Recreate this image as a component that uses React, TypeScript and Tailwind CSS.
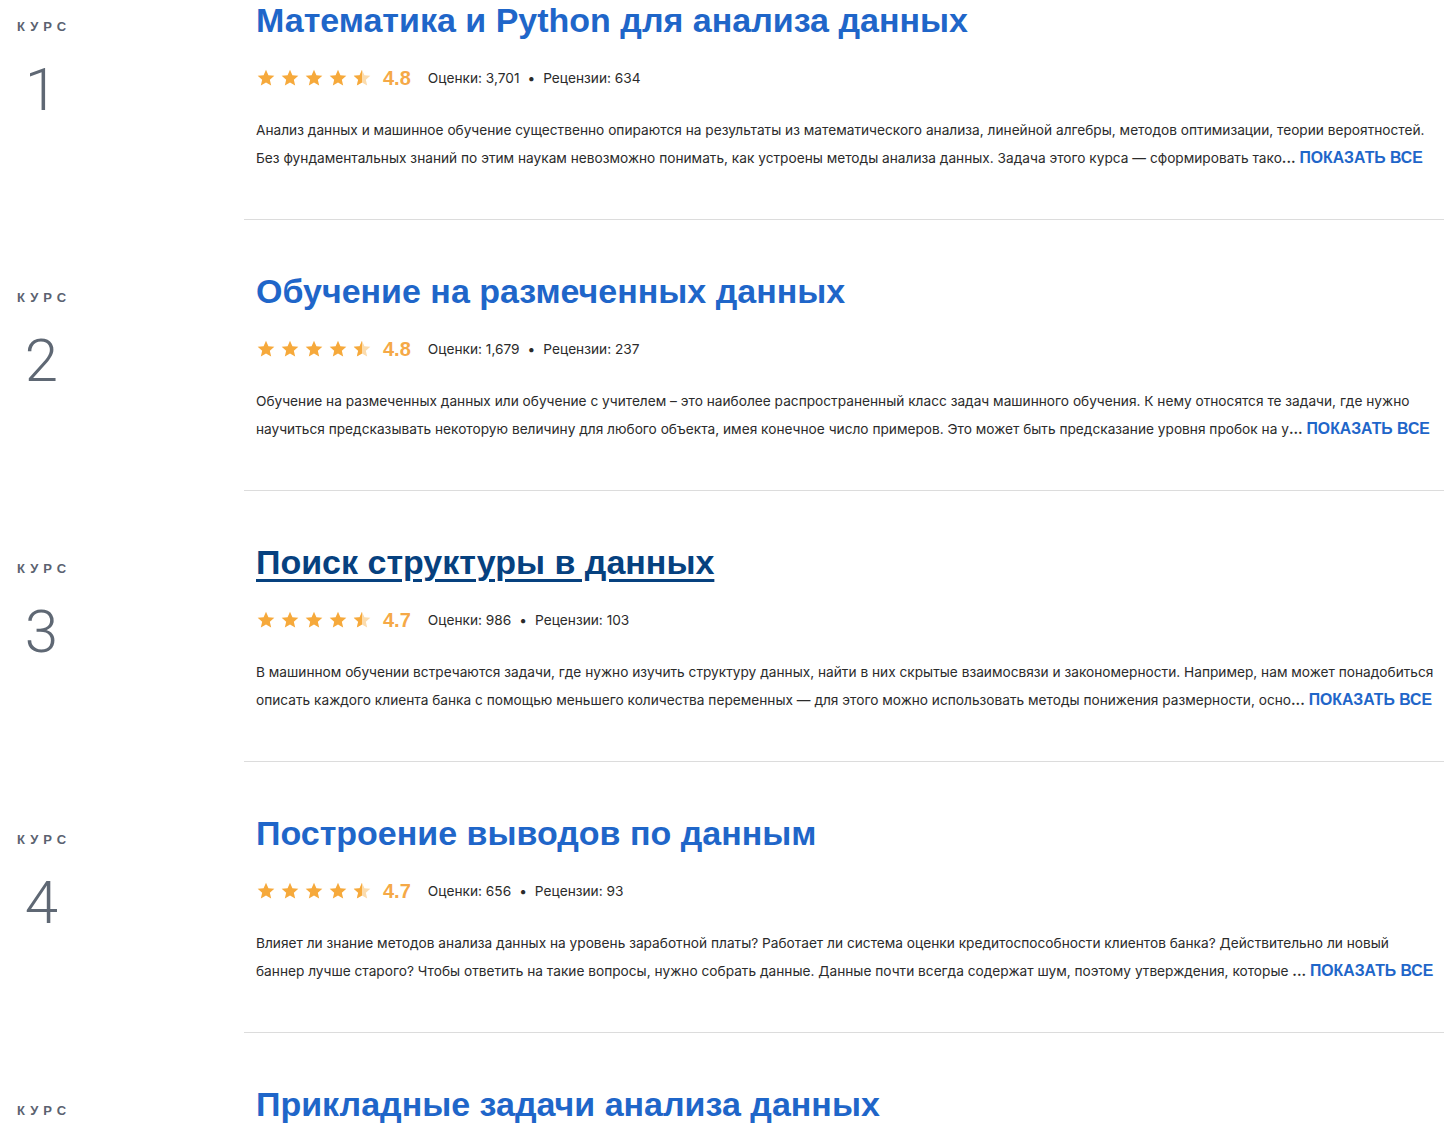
import React from "react";

type Course = {
  n: number;
  title: string;
  rating: string;
  votes: string;
  reviews: string;
  lines: [string, string];
  hovered?: boolean;
};

const courses: Course[] = [
  {
    n: 1,
    title: "Математика и Python для анализа данных",
    rating: "4.8",
    votes: "3,701",
    reviews: "634",
    lines: [
      "Анализ данных и машинное обучение существенно опираются на результаты из математического анализа, линейной алгебры, методов оптимизации, теории вероятностей.",
      "Без фундаментальных знаний по этим наукам невозможно понимать, как устроены методы анализа данных. Задача этого курса — сформировать тако",
    ],
  },
  {
    n: 2,
    title: "Обучение на размеченных данных",
    rating: "4.8",
    votes: "1,679",
    reviews: "237",
    lines: [
      "Обучение на размеченных данных или обучение с учителем – это наиболее распространенный класс задач машинного обучения. К нему относятся те задачи, где нужно",
      "научиться предсказывать некоторую величину для любого объекта, имея конечное число примеров. Это может быть предсказание уровня пробок на у",
    ],
  },
  {
    n: 3,
    title: "Поиск структуры в данных",
    rating: "4.7",
    votes: "986",
    reviews: "103",
    hovered: true,
    lines: [
      "В машинном обучении встречаются задачи, где нужно изучить структуру данных, найти в них скрытые взаимосвязи и закономерности. Например, нам может понадобиться",
      "описать каждого клиента банка с помощью меньшего количества переменных — для этого можно использовать методы понижения размерности, осно",
    ],
  },
  {
    n: 4,
    title: "Построение выводов по данным",
    rating: "4.7",
    votes: "656",
    reviews: "93",
    lines: [
      "Влияет ли знание методов анализа данных на уровень заработной платы? Работает ли система оценки кредитоспособности клиентов банка? Действительно ли новый",
      "баннер лучше старого? Чтобы ответить на такие вопросы, нужно собрать данные. Данные почти всегда содержат шум, поэтому утверждения, которые ",
    ],
  },
  {
    n: 5,
    title: "Прикладные задачи анализа данных",
    rating: "4.6",
    votes: "",
    reviews: "",
    lines: ["", ""],
  },
];

const STAR = "M12 2.2l2.9 6.6 7.1.6-5.4 4.7 1.6 7-6.2-3.7-6.2 3.7 1.6-7L2 9.4l7.1-.6z";

function Star({ half }: { half?: boolean }) {
  return (
    <svg viewBox="0 0 24 24" className="h-[20px] w-[20px]">
      {half ? (
        <>
          <path d={STAR} fill="#fbdcae" />
          <path d={STAR} fill="#f6a93b" style={{ clipPath: "inset(0 50% 0 0)" }} />
        </>
      ) : (
        <path d={STAR} fill="#f6a93b" />
      )}
    </svg>
  );
}

function CourseRow({ c }: { c: Course }) {
  return (
    <div className="flex">
      <div className="w-[244px] shrink-0">
        <div className="w-[83px] pt-[70px] text-center">
          <div className="pl-[5px] font-['Liberation_Sans',sans-serif] text-[13px] font-bold leading-4 tracking-[5px] text-[#5b6270]">
            КУРС
          </div>
          <div className="mt-[25px] font-['Roboto',sans-serif] text-[60px] font-light leading-[60px] text-[#5f6874]">
            {c.n}
          </div>
        </div>
      </div>
      <div className="flex-1 border-b border-[#dcdcdc] pb-[47px] pl-3 pt-[51px]">
        <a
          href="#"
          className={
            c.hovered
              ? "font-['Liberation_Sans',sans-serif] text-[34px] font-bold leading-10 text-[#06417f] underline decoration-[3px] underline-offset-[5px]"
              : "font-['Liberation_Sans',sans-serif] text-[34px] font-bold leading-10 text-[#1f66c9]"
          }
        >
          {c.title}
        </a>
        <div className="mt-[26px] flex h-6 items-center">
          <div className="flex gap-[4px]">
            <Star />
            <Star />
            <Star />
            <Star />
            <Star half />
          </div>
          <span className="ml-[11px] font-['Liberation_Sans',sans-serif] text-[20px] font-bold text-[#f5a947]">
            {c.rating}
          </span>
          <span className="ml-[17px] font-['Inter',sans-serif] text-[13.7px] text-[#2b2b2b]">
            Оценки: {c.votes}
            <span className="mx-[8px]">•</span>
            Рецензии: {c.reviews}
          </span>
        </div>
        <div className="mt-[27px] font-['Inter',sans-serif] text-[13.7px] leading-[27px] text-[#2b2b2b]">
          <div className="whitespace-nowrap">{c.lines[0]}</div>
          <div className="whitespace-nowrap">
            {c.lines[1]}
            <span className="font-bold">...</span>{" "}
            <a href="#" className="font-['Liberation_Sans',sans-serif] text-[15.8px] font-bold text-[#1f66c9]">
              ПОКАЗАТЬ ВСЕ
            </a>
          </div>
        </div>
      </div>
    </div>
  );
}

export default function App() {
  return (
    <div className="h-[1138px] overflow-hidden bg-white">
      <div className="-mt-[51px]">
        {courses.map((c) => (
          <CourseRow key={c.n} c={c} />
        ))}
      </div>
    </div>
  );
}
